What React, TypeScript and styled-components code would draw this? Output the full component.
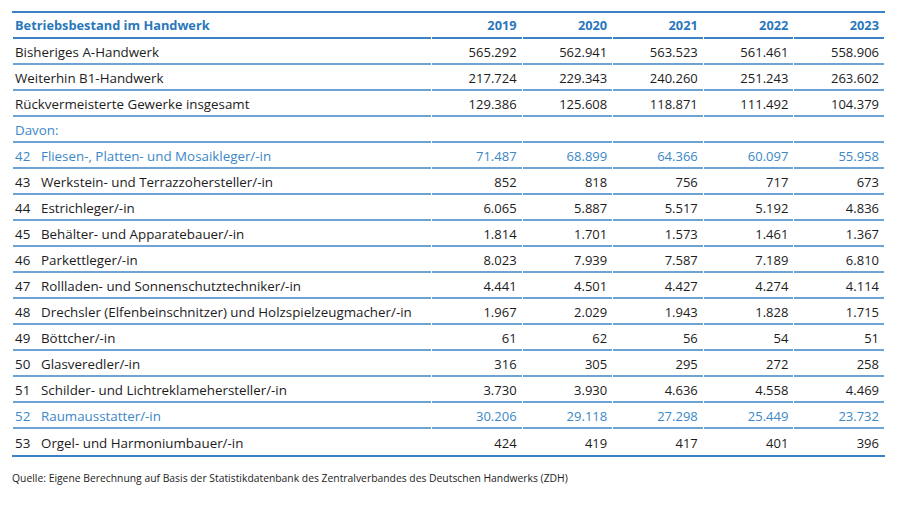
import React from 'react';
import styled, { createGlobalStyle } from 'styled-components';

const GlobalStyle = createGlobalStyle`
  html, body {
    margin: 0;
    padding: 0;
    background: #ffffff;
  }
  body {
    font-family: 'Open Sans', 'Noto Sans', sans-serif;
    color: #1c1c1c;
  }
`;

type Row = {
  nr?: string;
  label: string;
  values: string[];
  accent?: boolean;
};

const YEARS = ['2019', '2020', '2021', '2022', '2023'];

const ROWS: Row[] = [
  { label: 'Bisheriges A-Handwerk', values: ['565.292', '562.941', '563.523', '561.461', '558.906'] },
  { label: 'Weiterhin B1-Handwerk', values: ['217.724', '229.343', '240.260', '251.243', '263.602'] },
  { label: 'Rückvermeisterte Gewerke insgesamt', values: ['129.386', '125.608', '118.871', '111.492', '104.379'] },
  { label: 'Davon:', values: ['', '', '', '', ''], accent: true },
  { nr: '42', label: 'Fliesen-, Platten- und Mosaikleger/-in', values: ['71.487', '68.899', '64.366', '60.097', '55.958'], accent: true },
  { nr: '43', label: 'Werkstein- und Terrazzohersteller/-in', values: ['852', '818', '756', '717', '673'] },
  { nr: '44', label: 'Estrichleger/-in', values: ['6.065', '5.887', '5.517', '5.192', '4.836'] },
  { nr: '45', label: 'Behälter- und Apparatebauer/-in', values: ['1.814', '1.701', '1.573', '1.461', '1.367'] },
  { nr: '46', label: 'Parkettleger/-in', values: ['8.023', '7.939', '7.587', '7.189', '6.810'] },
  { nr: '47', label: 'Rollladen- und Sonnenschutztechniker/-in', values: ['4.441', '4.501', '4.427', '4.274', '4.114'] },
  { nr: '48', label: 'Drechsler (Elfenbeinschnitzer) und Holzspielzeugmacher/-in', values: ['1.967', '2.029', '1.943', '1.828', '1.715'] },
  { nr: '49', label: 'Böttcher/-in', values: ['61', '62', '56', '54', '51'] },
  { nr: '50', label: 'Glasveredler/-in', values: ['316', '305', '295', '272', '258'] },
  { nr: '51', label: 'Schilder- und Lichtreklamehersteller/-in', values: ['3.730', '3.930', '4.636', '4.558', '4.469'] },
  { nr: '52', label: 'Raumausstatter/-in', values: ['30.206', '29.118', '27.298', '25.449', '23.732'], accent: true },
  { nr: '53', label: 'Orgel- und Harmoniumbauer/-in', values: ['424', '419', '417', '401', '396'] },
];

export default function App() {
  const lastIndex = ROWS.length - 1;
  return (
    <>
      <GlobalStyle />
      <Page>
        <Table>
          <colgroup>
            <col style={{ width: 418 }} />
            {YEARS.map((y) => (
              <col key={y} />
            ))}
          </colgroup>
          <thead>
            <tr>
              <HeadCell>Betriebsbestand im Handwerk</HeadCell>
              {YEARS.map((y) => (
                <HeadCell key={y} $num>
                  {y}
                </HeadCell>
              ))}
            </tr>
          </thead>
          <tbody>
            {ROWS.map((row, r) => (
              <tr key={row.label}>
                <Cell $accent={row.accent} $last={r === lastIndex}>
                  {row.nr && <RowNr>{row.nr}</RowNr>}
                  {row.label}
                </Cell>
                {row.values.map((v, i) => (
                  <Cell key={i} $accent={row.accent} $last={r === lastIndex} $num>
                    {v}
                  </Cell>
                ))}
              </tr>
            ))}
          </tbody>
        </Table>
        <Source>
          Quelle: Eigene Berechnung auf Basis der Statistikdatenbank des Zentralverbandes des Deutschen
          Handwerks (ZDH)
        </Source>
      </Page>
    </>
  );
}

const Page = styled.div`
  padding: 11px 0 0 13px;
  width: 900px;
  box-sizing: border-box;
`;

const Table = styled.table`
  width: 873px;
  table-layout: fixed;
  border-collapse: separate;
  border-spacing: 1px 0;
  margin-left: -1px;
  border-top: 2px solid #3a82c4;
  border-bottom: 2px solid #3a82c4;
`;

const HeadCell = styled.th<{ $num?: boolean }>`
  height: 26px;
  padding: 0 5px 0 2px;
  text-align: ${(p) => (p.$num ? 'right' : 'left')};
  font-size: 12.8px;
  font-weight: 700;
  color: #2a77bb;
  border-bottom: 2px solid #3a82c4;
  box-sizing: border-box;
  white-space: nowrap;
`;

const Cell = styled.td<{ $num?: boolean; $accent?: boolean; $last?: boolean }>`
  height: 26px;
  padding: 1px 5px 0 2px;
  text-align: ${(p) => (p.$num ? 'right' : 'left')};
  font-size: ${(p) => (p.$num ? '13px' : '13.35px')};
  color: ${(p) => (p.$accent ? '#3b87c8' : '#1c1c1c')};
  border-bottom: ${(p) => (p.$last ? 'none' : '2px solid #6ea3d6')};
  box-sizing: border-box;
  white-space: nowrap;
`;

const RowNr = styled.span`
  display: inline-block;
  width: 26px;
`;

const Source = styled.p`
  margin: 14px 0 0 -1px;
  font-size: 10.35px;
  color: #1c1c1c;
`;
